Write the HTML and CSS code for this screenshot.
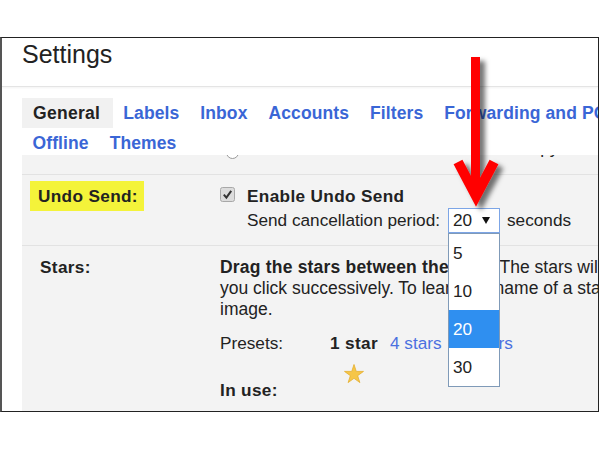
FILE: index.html
```html
<!DOCTYPE html>
<html>
<head>
<meta charset="utf-8">
<title>Settings</title>
<link rel="stylesheet" href="styles.css">
</head>
<body>
<div class="frame">
  <div class="header">Settings</div>
  <div class="tabs">
    <div class="tab-row">
      <span class="tab active">General</span>
      <a class="tab">Labels</a>
      <a class="tab">Inbox</a>
      <a class="tab">Accounts</a>
      <a class="tab">Filters</a>
      <a class="tab">Forwarding and POP/IMAP</a>
    </div>
    <div class="tab-row second">
      <a class="tab">Offline</a>
      <a class="tab">Themes</a>
    </div>
  </div>
  <div class="content">
    <div class="row cut">
      <div class="cut-inner">
        <span class="radio"></span><span class="cut-text">copy</span>
      </div>
    </div>
    <div class="row undo">
      <div class="label"><span class="hl">Undo Send:</span></div>
      <div class="value">
        <div class="line1">
          <svg class="checkbox" width="15" height="15" viewBox="0 0 15 15"><rect x="0.5" y="0.5" width="14" height="14" rx="2" fill="#dcdcdc" stroke="#a8a8a8"/><path d="M3.8 7.6 L6.4 10.6 L11.2 3.8" fill="none" stroke="#333" stroke-width="2"/></svg>
          <b>Enable Undo Send</b>
        </div>
        <div class="line2">
          <span>Send cancellation period:</span>
          <div class="select">
            <span>20</span>
            <svg class="caret" width="8" height="7" viewBox="0 0 8 7"><polygon points="0,0 8,0 4,7" fill="#111"/></svg>
            <div class="dropdown">
              <div class="opt">5</div>
              <div class="opt">10</div>
              <div class="opt sel">20</div>
              <div class="opt">30</div>
            </div>
          </div>
          <span class="secs">seconds</span>
        </div>
      </div>
    </div>
    <div class="row stars">
      <div class="label">Stars:</div>
      <div class="value">
        <p class="desc"><b>Drag the stars between the lists.</b> The stars will rotate in the order shown below when<br>you click successively. To learn the name of a star for search, hover your mouse over the<br>image.</p>
        <div class="presets">
          <span class="plabel">Presets:</span>
          <div class="opts">
            <div class="preset">
              <b>1 star</b>
              <div class="star-slot">
                <svg class="star" width="20" height="20" viewBox="0 0 20 20"><polygon points="10,0.5 12.25,7.41 19.51,7.41 13.63,11.68 15.88,18.59 10,14.32 4.12,18.59 6.37,11.68 0.49,7.41 7.75,7.41" fill="#f6c648" stroke="#e5ae2e" stroke-width="0.8"/></svg>
              </div>
            </div>
            <a class="preset link">4 stars</a>
            <a class="preset link">all stars</a>
          </div>
        </div>
        <div class="inuse">In use:</div>
      </div>
    </div>
  </div>
</div>
<svg class="arrow" width="600" height="450" viewBox="0 0 600 450">
  <defs>
    <filter id="sh" x="-50%" y="-20%" width="200%" height="140%">
      <feDropShadow dx="5" dy="4" stdDeviation="2.5" flood-color="#000" flood-opacity="0.55"/>
    </filter>
  </defs>
  <g filter="url(#sh)" fill="none" stroke="#ff0000">
    <path d="M475.5 57 V196" stroke-width="9"/>
    <path d="M458 162 L476 196 L494 162" stroke-width="10" stroke-linejoin="miter" stroke-miterlimit="10"/>
  </g>
</svg>
</body>
</html>
```
FILE: styles.css
```css
* { box-sizing: border-box; }
html, body { margin: 0; padding: 0; background: #fff; }
body {
  font-family: "Liberation Sans", Arial, sans-serif;
  color: #222;
  width: 600px;
  height: 450px;
  overflow: hidden;
  position: relative;
}
.frame {
  margin-top: 37px;
  width: 599px;
  height: 375px;
  border: 1px solid #222;
  border-left: 2px solid #555;
  overflow: hidden;
  background: #fff;
  display: flex;
  flex-direction: column;
}
.header {
  height: 49px;
  flex: none;
  padding: 4px 0 0 20px;
  font-size: 25px;
  line-height: 25px;
  color: #222;
  border-bottom: 1px solid #e4e4e4;
  box-shadow: 0 1px 2px rgba(0,0,0,0.05);
}
.tabs {
  flex: none;
  padding: 11px 0 0 20px;
  font-size: 17.5px;
  font-weight: bold;
  letter-spacing: 0.1px;
}
.tab-row { display: flex; white-space: nowrap; }
.tab-row.second { height: 27px; }
.tab {
  padding: 0 10.5px;
  line-height: 30px;
  color: #3a66d6;
  text-decoration: none;
}
.tab.active { background: #f1f1f1; color: #222; padding: 0 12.5px 0 11px; letter-spacing: 0.3px; }
.content {
  flex: 1;
  margin-left: 20px;
  background: #f3f3f3;
  font-size: 17.2px;
}
.content b, .hl, .stars .label, .inuse { letter-spacing: 0.35px; }
.row { border-bottom: 1px solid #e2e2e2; }
.cut { height: 20px; overflow: hidden; }
.cut-inner {
  display: flex;
  margin-top: -17px;
  height: 21px;
  line-height: 21px;
  white-space: nowrap;
}
.radio {
  width: 13px;
  height: 13px;
  margin: 8px 0 0 204px;
  border: 1px solid #9a9a9a;
  border-radius: 50%;
  background: #fff;
}
.cut-text { margin-left: 283px; }
.undo {
  height: 71px;
  display: grid;
  grid-template-columns: 198px 1fr;
}
.undo .label { padding-top: 6px; }
.hl {
  display: inline-block;
  margin-left: 8px;
  padding: 0 6px 0 8px;
  line-height: 30px;
  background: #f4f33a;
  font-weight: bold;
}
.undo .value { padding-top: 10px; white-space: nowrap; }
.line1 {
  display: flex;
  height: 23px;
  line-height: 23px;
}
.checkbox { margin-top: 2px; margin-right: 12px; flex: none; }
.line2 {
  display: flex;
  align-items: center;
  height: 25px;
  margin-left: 27px;
}
.select {
  position: relative;
  display: flex;
  align-items: center;
  width: 52px;
  height: 25px;
  margin-left: 8px;
  padding-left: 4px;
  border: 1px solid #7ca5e6;
  background: #fff;
}
.caret { margin-left: 10px; }
.dropdown {
  position: absolute;
  top: 24px;
  left: -1px;
  width: 52px;
  border: 1px solid #7f9ab8;
  background: #fff;
  z-index: 2;
}
.opt { height: 38px; line-height: 38px; padding-left: 4px; }
.opt.sel { background: #2f8ff0; color: #fff; }
.secs { margin-left: 7px; }
.stars {
  border-bottom: none;
  display: grid;
  grid-template-columns: 198px 1fr;
  padding-top: 11px;
}
.stars .label { padding-left: 18px; line-height: 21px; font-weight: bold; }
.desc { margin: 0; line-height: 21px; white-space: nowrap; font-size: 17.5px; }
.desc b { letter-spacing: 0.2px; }
.presets { display: flex; margin-top: 13px; line-height: 21px; white-space: nowrap; }
.plabel { width: 110px; flex: none; }
.opts { display: flex; gap: 12px; }
.preset { display: flex; flex-direction: column; align-items: center; }
.link { color: #4a70e0; text-decoration: none; }
.star-slot { margin-top: 10px; height: 14px; }
.star { display: block; }
.inuse { font-weight: bold; line-height: 21px; margin-top: 2px; }
.arrow {
  position: absolute;
  top: 0;
  left: 0;
  pointer-events: none;
}
```
